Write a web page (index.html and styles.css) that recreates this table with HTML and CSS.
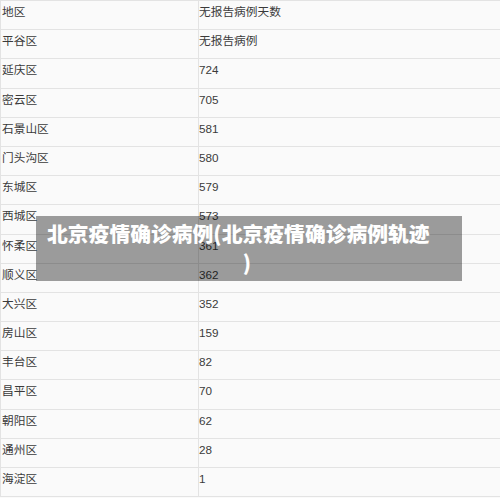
FILE: index.html
```html
<!DOCTYPE html>
<html lang="zh-CN">
<head>
<meta charset="utf-8">
<title>北京疫情确诊病例</title>
<link rel="stylesheet" href="styles.css">
</head>
<body>
<div class="page">
  <div class="grid">
    <div class="cell c1">地区</div><div class="cell c2">无报告病例天数</div>
    <div class="cell c1">平谷区</div><div class="cell c2">无报告病例</div>
    <div class="cell c1">延庆区</div><div class="cell c2">724</div>
    <div class="cell c1">密云区</div><div class="cell c2">705</div>
    <div class="cell c1">石景山区</div><div class="cell c2">581</div>
    <div class="cell c1">门头沟区</div><div class="cell c2">580</div>
    <div class="cell c1">东城区</div><div class="cell c2">579</div>
    <div class="cell c1">西城区</div><div class="cell c2">573</div>
    <div class="cell c1">怀柔区</div><div class="cell c2">361</div>
    <div class="cell c1">顺义区</div><div class="cell c2">362</div>
    <div class="cell c1">大兴区</div><div class="cell c2">352</div>
    <div class="cell c1">房山区</div><div class="cell c2">159</div>
    <div class="cell c1">丰台区</div><div class="cell c2">82</div>
    <div class="cell c1">昌平区</div><div class="cell c2">70</div>
    <div class="cell c1">朝阳区</div><div class="cell c2">62</div>
    <div class="cell c1">通州区</div><div class="cell c2">28</div>
    <div class="cell c1">海淀区</div><div class="cell c2">1</div>
  </div>
  <div class="banner">
    <div class="line1">北京疫情确诊病例(北京疫情确诊病例轨迹</div>
    <div class="line2">)</div>
  </div>
</div>
</body>
</html>
```
FILE: styles.css
```css
html, body {
  margin: 0;
  padding: 0;
  background: #fafafa;
}
.page {
  position: relative;
  width: 500px;
  height: 498px;
  overflow: hidden;
  font-family: "Liberation Sans", "Noto Sans CJK SC", sans-serif;
}
.grid {
  display: grid;
  grid-template-columns: 197px 1fr;
  border-left: 1px solid #e3e3e3;
  border-bottom: 1px solid #e3e3e3;
}
.cell {
  box-sizing: border-box;
  height: 29.2px;
  border-top: 1px solid #e3e3e3;
  padding: 1px 0 0 1px;
  font-size: 11.7px;
  line-height: 20px;
  color: #3a3a3a;
  white-space: nowrap;
}
.c2 {
  border-left: 1px solid #e3e3e3;
  padding-left: 0;
}
.banner {
  position: absolute;
  left: 36px;
  top: 216px;
  width: 426px;
  box-sizing: border-box;
  padding: 3px 0 4px 0;
  background: rgba(0, 0, 0, 0.38);
  color: #ffffff;
  font-family: "Noto Sans CJK SC", sans-serif;
  font-weight: 900;
  font-size: 20.8px;
  line-height: 29px;
}
.line1 {
  padding-left: 11px;
  white-space: nowrap;
}
.line2 {
  text-align: center;
  padding-right: 4px;
}
```
